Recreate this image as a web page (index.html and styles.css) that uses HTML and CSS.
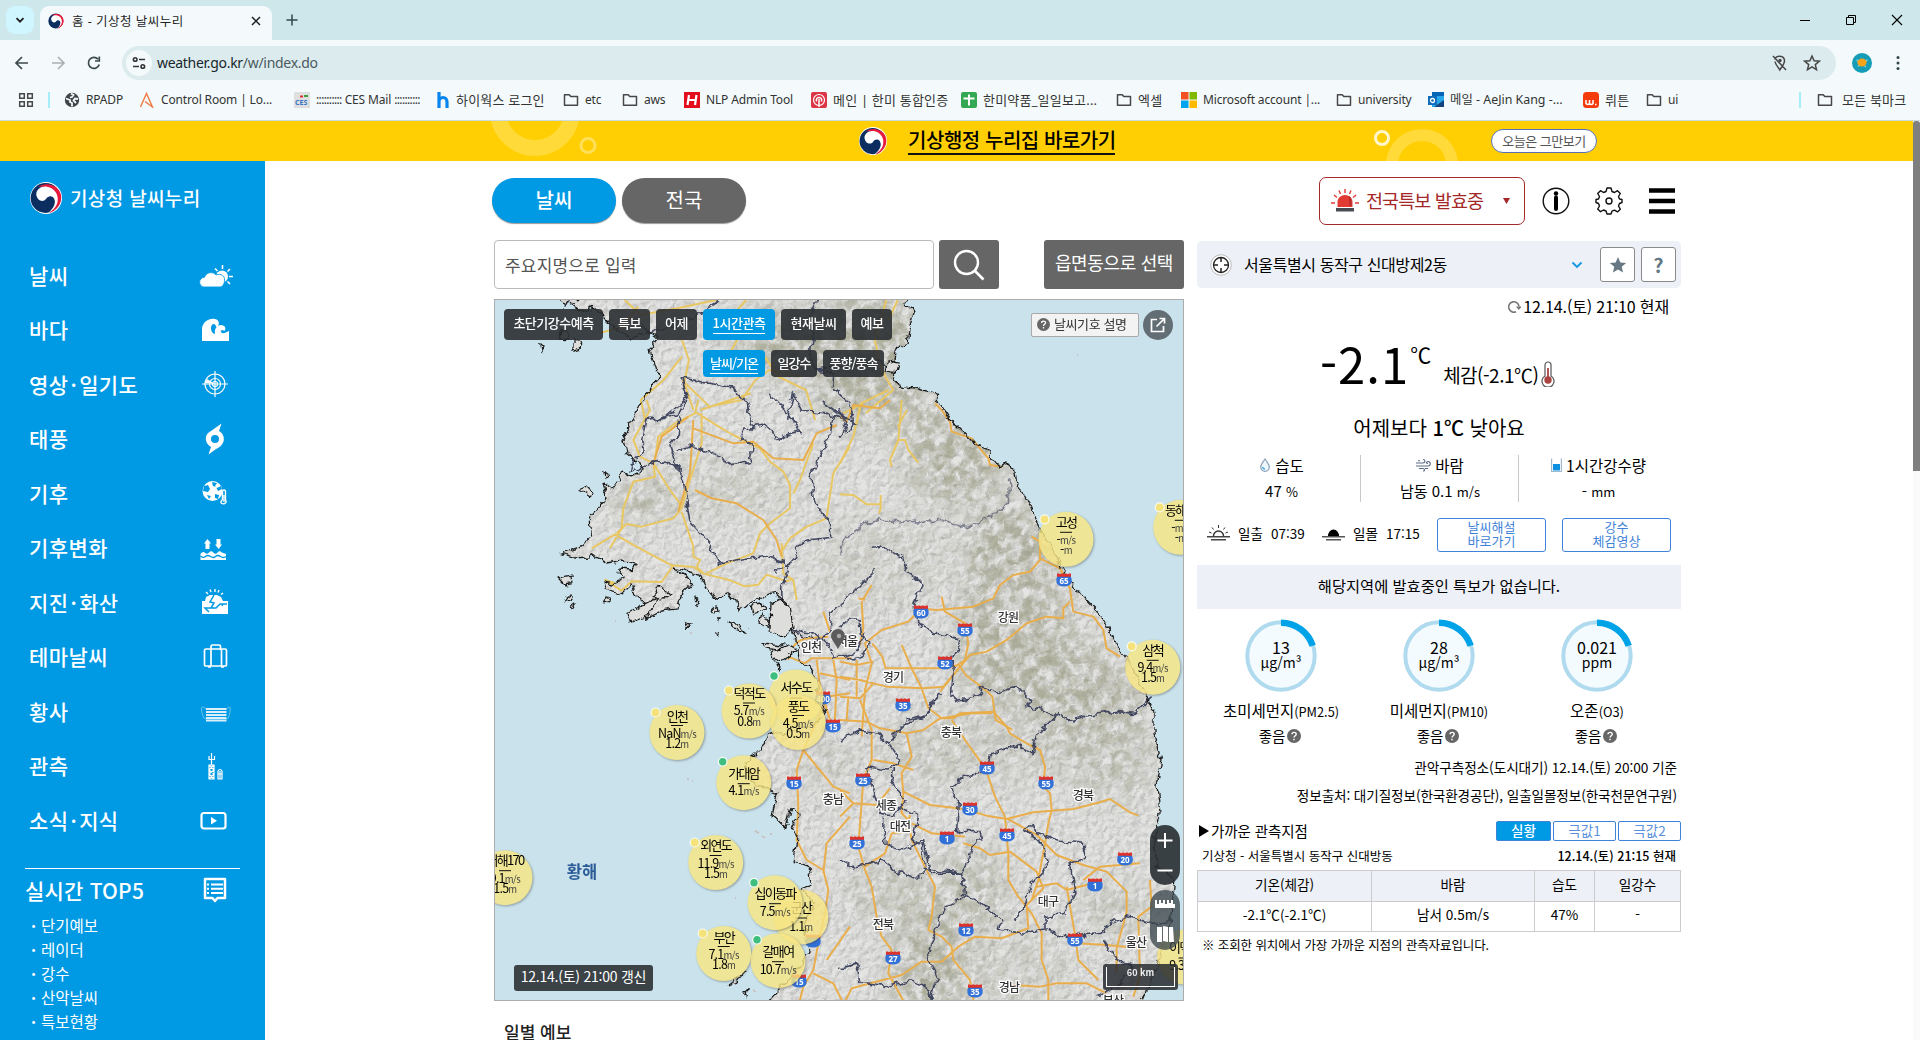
FILE: index.html
```html
<!DOCTYPE html>
<html lang="ko">
<head>
<meta charset="utf-8">
<title>홈 - 기상청 날씨누리</title>
<link rel="stylesheet" href="styles.css">
</head>
<body>
<svg class="defs" width="0" height="0" aria-hidden="true">
  <symbol id="emblem" viewBox="0 0 32 32">
    <circle cx="16" cy="16" r="16" fill="#fff"/>
    <circle cx="15.6" cy="16" r="15" fill="#0b2d60"/>
    <path d="M8 5C16-1 29 3 31 13c1.500 9-5 16-12 18.300C25 26 27 20 25 13c-3-7-11-9-17-8z" fill="#e8193c"/>
    <path d="M6.300 12.500C6 7 12 3.500 17 4.700c8 1.600 12 8.300 10.500 15.300C26.300 25.300 22.500 29 18 31c6-4.700 8.300-10.500 6-14.500-2-3.300-6-2.500-8 .500-3.200 4-9 1.500-9.700-4.500z" fill="#fff"/>
  </symbol>
  <symbol id="folder" viewBox="0 0 16 16"><path d="M1.500 13.300V2.700h4.700l1.600 1.800h6.700v8.800z" fill="none" stroke="#474747" stroke-width="1.500" stroke-linejoin="round"/></symbol>
  <symbol id="qmark" viewBox="0 0 14 14"><circle cx="7" cy="7" r="7" fill="#666"/><path d="M5 5.300C5 2.700 9.200 2.800 9.200 5.200 9.200 6.800 7 6.700 7 8.600M7 9.800v1.500" fill="none" stroke="#fff" stroke-width="1.400"/></symbol>
</svg>

<header class="browser">
  <div class="tabstrip">
    <button class="tab-search"><svg width="10" height="10" viewBox="0 0 10 10"><path d="M1.500 3.200 5 6.700l3.500-3.500" fill="none" stroke="#1f1f1f" stroke-width="1.800"/></svg></button>
    <div class="tab">
      <svg width="16" height="16"><use href="#emblem"/></svg>
      <span class="tab-title">홈 - 기상청 날씨누리</span>
      <svg width="10" height="10" viewBox="0 0 10 10"><path d="M1 1l8 8M9 1 1 9" stroke="#1f1f1f" stroke-width="1.500"/></svg>
    </div>
    <svg class="new-tab" width="12" height="12" viewBox="0 0 12 12"><path d="M6 .500v11M.500 6h11" stroke="#33474b" stroke-width="1.500"/></svg>
    <div class="window-buttons">
      <svg width="12" height="12" viewBox="0 0 12 12"><path d="M1 6.500h10" stroke="#000"/></svg>
      <svg width="12" height="12" viewBox="0 0 12 12"><path d="M1.500 3.500h7v7h-7zM3.500 3.500v-2h7v7h-2" fill="none" stroke="#000"/></svg>
      <svg width="12" height="12" viewBox="0 0 12 12"><path d="M1 1l10 10M11 1 1 11" stroke="#000" stroke-width="1.100"/></svg>
    </div>
  </div>
  <div class="toolbar">
    <svg width="16" height="16" viewBox="0 0 16 16"><path d="M8 2 2 8l6 6M2 8h12" fill="none" stroke="#3c4a4d" stroke-width="1.700"/></svg>
    <svg width="16" height="16" viewBox="0 0 16 16"><path d="m8 2 6 6-6 6M2 8h12" fill="none" stroke="#a9b1b3" stroke-width="1.700"/></svg>
    <svg width="16" height="16" viewBox="0 0 16 16"><path d="M13.200 9.500A5.500 5.500 0 1 1 12 4.200M13.300 1.500V6H9" fill="none" stroke="#3c4a4d" stroke-width="1.700"/></svg>
    <div class="omnibox">
      <span class="site-info"><svg width="14" height="14" viewBox="0 0 14 14"><g fill="none" stroke="#333" stroke-width="1.600"><circle cx="3.200" cy="3.500" r="1.800"/><path d="M7 3.500h6M1 10.500h6"/><circle cx="10.800" cy="10.500" r="1.800"/></g></svg></span>
      <span class="url">weather.go.kr<i>/w/index.do</i></span>
      <svg class="push" width="18" height="18" viewBox="0 0 18 18"><path d="M4 5.500C4.500 1 13.500 1 13.500 7c0 3-3 6-4.700 9C7.500 13.500 4.500 11 4 7.500M2 2l13 14" fill="none" stroke="#474747" stroke-width="1.500"/><circle cx="9" cy="6.500" r="1.700" fill="#474747"/></svg>
      <svg width="18" height="18" viewBox="0 0 18 18"><path d="m9 2 2.100 4.700 5.100.500-3.900 3.400 1.200 5L9 12.900l-4.500 2.700 1.200-5-3.900-3.400 5.100-.500z" fill="none" stroke="#474747" stroke-width="1.500"/></svg>
    </div>
    <svg class="avatar" width="20" height="20" viewBox="0 0 20 20"><circle cx="10" cy="10" r="10" fill="#159db8"/><path d="M4.500 7l2 1M15.500 7l-2 1M6 13.500l1.500-1.500M14 14l-1.500-1.500" stroke="#7bd3d8" stroke-width="1.400"/><ellipse cx="10" cy="9.500" rx="4.600" ry="4" fill="#f5a31a"/></svg>
    <svg width="16" height="16" viewBox="0 0 16 16" fill="#33474b"><circle cx="8" cy="2.500" r="1.500"/><circle cx="8" cy="8" r="1.500"/><circle cx="8" cy="13.500" r="1.500"/></svg>
  </div>
  <nav class="bookmarks">
    <span class="apps"><svg width="16" height="16" viewBox="0 0 16 16"><path d="M1.700 1.700h4.600v4.600H1.700zM9.700 1.700h4.600v4.600H9.700zM1.700 9.700h4.600v4.600H1.700zM9.700 9.700h4.600v4.600H9.700z" fill="none" stroke="#474747" stroke-width="1.500"/></svg></span>
    <a><svg width="16" height="16" viewBox="0 0 16 16"><circle cx="8" cy="8" r="7.200" fill="#414549"/><path d="M2 6.500l4 1.500v2l2 1v3.500M7 1.500 9.500 3 8 5 6 5.500M14 7l-3-.500-1.500 2L12 11" stroke="#f4fafb" stroke-width="1.800" fill="none"/></svg>RPADP</a>
    <a><svg width="16" height="16" viewBox="0 0 16 16"><path d="M1.500 15 7.500 1.500 13.500 15 6 9.500" fill="none" stroke="#ee7b43" stroke-width="1.400"/></svg>Control Room | Lo...</a>
    <a><svg width="16" height="16" viewBox="0 0 16 16"><path d="M0 0h16v16H0z" fill="#dfdfdf"/><path d="M6 4.500h3" stroke="#d33" stroke-width="2"/><path d="M10 4h4" stroke="#3b9e40" stroke-width="2"/><text x="1" y="13" class="ces">CES</text></svg><span><i>::::::::::</i> CES Mail <i>::::::::::</i></span></a>
    <a class="ko"><svg width="14" height="16" viewBox="0 0 14 16"><path d="M3 0v16M3 10c0-6 8-6 8 0v6" fill="none" stroke="#0785ee" stroke-width="3.200"/></svg>하이웍스 로그인</a>
    <a><svg width="16" height="16"><use href="#folder"/></svg>etc</a>
    <a><svg width="16" height="16"><use href="#folder"/></svg>aws</a>
    <a><svg width="16" height="16" viewBox="0 0 16 16"><path d="M0 0h16v16H0z" fill="#e30d1c"/><path d="M5 3 3.500 13M12.500 3 11 13M4 8h8" stroke="#fff" stroke-width="2.200"/></svg>NLP Admin Tool</a>
    <a class="ko"><svg width="16" height="16" viewBox="0 0 16 16"><rect width="16" height="16" rx="2" fill="#dc3545"/><circle cx="8" cy="8" r="5.500" fill="none" stroke="#fff" stroke-width="1.200"/><path d="M5.500 9.500C4 4 12 4 10.500 9.500M8 7v8" fill="none" stroke="#fff" stroke-width="1.500"/></svg>메인 | 한미 통합인증</a>
    <a class="ko"><svg width="16" height="16" viewBox="0 0 16 16"><rect width="16" height="16" rx="2" fill="#34a853"/><path d="M8 2.500v11M2.500 6.500h11" stroke="#fff" stroke-width="2"/></svg>한미약품_일일보고...</a>
    <a class="ko"><svg width="16" height="16"><use href="#folder"/></svg>엑셀</a>
    <a><svg width="16" height="16" viewBox="0 0 16 16"><path d="M0 0h7.500v7.500H0z" fill="#f25022"/><path d="M8.500 0H16v7.500H8.500z" fill="#7fba00"/><path d="M0 8.500h7.500V16H0z" fill="#00a4ef"/><path d="M8.500 8.500H16V16H8.500z" fill="#ffb900"/></svg>Microsoft account |...</a>
    <a><svg width="16" height="16"><use href="#folder"/></svg>university</a>
    <a><svg width="16" height="16" viewBox="0 0 16 16"><path d="M4 0h12v15H4z" fill="#28a8ea"/><path d="M4 0h12v4H4z" fill="#0364b8"/><path d="m6 15 10-7v7z" fill="#14447d"/><path d="M0 4h9v9H0z" fill="#0f6cbd"/><circle cx="4.500" cy="8.500" r="2" fill="none" stroke="#fff" stroke-width="1.300"/></svg><span class="mail">메일 - AeJin Kang -...</span></a>
    <a class="ko"><svg width="16" height="16" viewBox="0 0 16 16"><rect width="16" height="16" rx="3.500" fill="#f43b0b"/><path d="M3 8v3.500q2 2 3.500 0V8v3.500q2 2 3.500 0V8M12 12.500h1.500" fill="none" stroke="#fff" stroke-width="1.500"/></svg>뤼튼</a>
    <a><svg width="16" height="16"><use href="#folder"/></svg>ui</a>
    <a class="all ko"><svg width="16" height="16"><use href="#folder"/></svg>모든 북마크</a>
  </nav>
</header>

<div class="viewport">
  <div class="site">
    <div class="banner">
      <svg class="banner-art" width="1913" height="40" viewBox="0 121 1913 40" fill="none">
        <circle cx="535" cy="111" r="37" stroke="#ffda38" stroke-width="16"/>
        <circle cx="588" cy="145.500" r="7" stroke="#ffe05c" stroke-width="3"/>
        <circle cx="1382" cy="138" r="6.500" stroke="#fff6cc" stroke-width="3"/>
        <circle cx="1422" cy="165" r="30" stroke="#ffda38" stroke-width="12"/>
      </svg>
      <svg width="28" height="28"><use href="#emblem"/></svg>
      <a class="banner-link">기상행정 누리집 바로가기</a>
      <button class="banner-close">오늘은 그만보기</button>
    </div>
    <div class="page">
      <aside class="sidebar">
        <div class="brand"><svg width="32" height="32"><use href="#emblem"/></svg>기상청 날씨누리</div>
        <ul class="menu">
          <li>날씨<svg width="34" height="34" viewBox="0 -5 34 34"><circle cx="23" cy="13.500" r="6" fill="#fff"/><path d="M23.500 2v4M31 6l-2.500 2.500M34 13.500h-4M31 21l-2.500-2.500M16 5.500 18.500 8" stroke="#fff" stroke-width="1.600"/><path d="M5.500 24C-1 24-1 14.500 5.500 14.200 7.500 8.500 15 8.500 17 12c5-2 9 1 8.500 5 0 4-1.500 7-5 7z" fill="#fff" stroke="#0099e3" stroke-width=".900"/></svg></li>
          <li>바다<svg width="34" height="34" viewBox="0 0 34 34"><path d="M3 28V15C4 8 11 4.500 16 6c5 1 5 7 1 8 0-4-5-4-5 1 0 3 2 6 4 6-1-5 2-9 6-9 4 0 6 4 3 6-1-2-4-1-3 1 2 3 5 0 8-1v10z" fill="#fff"/></svg></li>
          <li><span>영상<i>·</i>일기도</span><svg width="34" height="34" viewBox="0 0 34 34"><g fill="none" stroke="#fff" stroke-width="1.200"><circle cx="16" cy="17" r="10"/><circle cx="16" cy="17" r="5.500"/><circle cx="16" cy="17" r="2.500"/><path d="M16 4v26M3 17h26"/></g><path d="m16 17-10-1 2-4z" fill="#fff"/></svg></li>
          <li>태풍<svg width="34" height="34" viewBox="0 0 34 34"><path d="M22.500 1.500 20 9c7 4 7 14-3 18L9.500 32.500 12 25C5 21 5 12 12 9z" fill="#fff"/><circle cx="16" cy="17" r="4" fill="#0099e3"/></svg></li>
          <li>기후<svg width="34" height="34" viewBox="0 0 34 34"><circle cx="13.500" cy="15" r="10" fill="#fff"/><path d="M5 10l4-1 2 4-2 3-5-1zM13 6l5 1-2 3 2 2 4-2 1 3-4 2-2-4-3-1zM8 19l4 1-2 3zM16 18l4 1-1 4-3-1z" fill="#0099e3"/><path d="M23.500 15.500c0-2 3-2 3 0V24c3 4-5.500 5.500-4.500 1.500l1.500-2z" fill="#0099e3" stroke="#fff" stroke-width="1.400"/><path d="M25 19v7" stroke="#fff" stroke-width="1.400"/></svg></li>
          <li>기후변화<svg width="34" height="34" viewBox="0 -3 34 34"><path d="M8.500 5 12 9.500h-1.500V15h-4V9.500H5zM19.700 15 16 10.500h1.500V5h4v5.500H23z" fill="#fff"/><path d="M1.500 20q2-3 4.200-1.500Q8 21 10 18.500t4.300 0 4.300 0 4.200 0L27 20v6H1.500z" fill="#fff"/><path d="M1.500 22q3 2.500 5 .500t5 0 5 0 5 0 5.500 0" fill="none" stroke="#0099e3" stroke-width="1.300"/></svg></li>
          <li><span>지진<i>·</i>화산</span><svg width="34" height="34" viewBox="0 0 34 34"><path d="M3 16h3l1-4 4-2h7l4 2 2 4h5v13H3z" fill="#fff"/><path d="m15 10-4 7 4 1-3 5h-6l4 4m2-4h5l4-4h7m-4 0-1 2" fill="none" stroke="#0099e3" stroke-width="1.500"/><path d="M7 7l2 2M11 4.500 12 7M16 4v3M20 5l-1 2.500M24 8l-2 1.500" stroke="#fff" stroke-width="1.400"/></svg></li>
          <li>테마날씨<svg width="34" height="34" viewBox="0 0 34 34"><path d="M12 10V6.500q0-1.500 1.500-1.500h6.500q1.500 0 1.500 1.500V10M7 9h19q1.500 0 1.500 1.500v14.500q0 1-1.500 1H7q-1.500 0-1.500-1V10.500Q5.500 9 7 9zM12 9v17M22.500 9v17M9 27h3M22 27h3" fill="none" stroke="#fff" stroke-width="1.700"/></svg></li>
          <li>황사<svg width="34" height="34" viewBox="0 0 34 34"><g fill="none" stroke="#fff"><path d="M7 15h20.500M7 18h20.500M7 21h20.500M7 24h20.500M7 26.500h20.500" stroke-width="1.800" opacity=".85"/><path d="M7 15Q2 10 2.500 16.500 4 25 7 25M27.500 15q5-5 3.500 2.500Q30 25 27.500 25" stroke-width=".800" opacity=".5"/></g></svg></li>
          <li>관측<svg width="34" height="34" viewBox="0 0 34 34"><g fill="none" stroke="#fff" stroke-width="1.200"><path d="M12.500 4v12M10 7v3.500h5.500V7M10 16h5v14h-5zM10 16l5 5-5 4 5 5M15 16l-5 5 5 4-5 5"/><path d="M19 30v-8q2-3 4 0v8zM19 25h4M21 22v8"/></g></svg></li>
          <li><span>소식<i>·</i>지식</span><svg width="34" height="34" viewBox="0 0 34 34"><rect x="2.500" y="10" width="24" height="15.500" rx="2.500" fill="none" stroke="#fff" stroke-width="2.200"/><path d="M12 14v7.500l6-3.750z" fill="#fff"/></svg></li>
        </ul>
        <div class="top5">
          <h2>실시간 TOP5<svg width="26" height="28" viewBox="0 0 26 28"><path d="M3 2h20v19h-7.500l-2.500 3-2.500-3H3z" fill="none" stroke="#fff" stroke-width="2.500" stroke-linejoin="round"/><path d="M9 7.500h12M9 11.700h12M9 16h12" stroke="#fff" stroke-width="2"/><path d="M5 7.500h2M5 11.700h2M5 16h2" stroke="#fff" stroke-width="2"/></svg></h2>
          <ul><li>단기예보</li><li>레이더</li><li>강수</li><li>산악날씨</li><li>특보현황</li></ul>
        </div>
      </aside>

      <main class="content">
        <div class="topbar">
          <a class="pill active">날씨</a><a class="pill">전국</a>
          <button class="alert"><svg width="28" height="24" viewBox="0 0 28 24"><path d="M6.500 18v-5.500a7.500 6.500 0 0 1 15 0V18z" fill="#e23b34"/><path d="M18 7c2 1 2.500 3 2.500 10h-2z" fill="#b52b2b"/><path d="M5 19h18v3.500H5z" fill="#474b52"/><path d="M14 0v4M8 1.500l1.500 3.500M20 1.500 18.500 5M3 6l3 2.500M25 6l-3 2.500M0 14h4M24 14h4" stroke="#e23b34" stroke-width="1.400"/></svg><span>전국특보 발효중</span><svg width="7" height="6" viewBox="0 0 7 6"><path d="M0 0h7L3.500 6z" fill="#a42828"/></svg></button>
          <svg class="i-info" width="28" height="28" viewBox="0 0 28 28"><circle cx="14" cy="14" r="12.800" fill="none" stroke="#111" stroke-width="1.400"/><circle cx="14" cy="6.500" r="2.200"/><path d="M14 10.500V22" stroke="#000" stroke-width="4" stroke-linecap="round"/></svg>
          <svg class="i-gear" width="28" height="28" viewBox="0 0 28 28"><path d="M12 1h4l1 3.500 2.500 1 3-1.800 2.800 2.800L23.500 9.500l1 2.500 2.500.500v3l-2.500 1-1 2.500 1.800 3.200-2.800 2.700-3-1.700-2.500 1L16 27h-4l-1-3-2.500-1-3 1.700-2.800-2.700L4.500 19l-1-2.500-2.500-1v-3l2.500-.5 1-2.500-1.800-3 2.800-2.800 3 1.800 2.500-1z" fill="none" stroke="#111" stroke-width="1.400" stroke-linejoin="round"/><circle cx="14" cy="14" r="3" fill="none" stroke="#111" stroke-width="1.400"/></svg>
          <svg class="i-menu" width="26" height="26" viewBox="0 0 26 26"><path d="M0 2.500h26M0 13h26M0 23.500h26" stroke="#000" stroke-width="4.600"/></svg>
        </div>

        <div class="columns">
          <section class="left">
            <div class="search">
              <div class="field">주요지명으로 입력</div>
              <button class="find"><svg width="34" height="34" viewBox="0 0 34 34"><circle cx="14.500" cy="14.500" r="11.500" fill="none" stroke="#fff" stroke-width="2.400"/><path d="m23 23 8.500 8.500" stroke="#fff" stroke-width="2.600"/></svg></button>
              <button class="pick">읍면동으로 선택</button>
            </div>

            <div class="map">
              <svg class="map-art" width="688" height="700" viewBox="495 300 688 700">
                <defs>
                  <clipPath id="landclip"><path id="land" d="M558 299l6 9 4-7 14 10 10-4 12 10 9 9 18 12 19-6 7 5-7 13 4 10 4 18-11 15-9 16-8 15-7 17 3 12 10 9 9 6-6 3-7 7-10-6-3 9-6 8-9-6 3 13-6 8-12 14 1 10 2 9-6 5-7 6-17 6 12 4 13-1 4-3 16 9 15-3 14 4-5 5-12-1-1 6 6 5-10 4-10-2 2 7 15 6 10-10 3 9 8 8 4 18 16-8 15-2 4-15 11-10-6-8-14-8 27 6 7 14 10 12 10-7 10 7 3 12 10-9 13-5 12-6 13 11 2 17 3 13 5 7 2 20 13 10 7 13-4 18 11 9-10 14-34 10-10-3-11 17-8 8-8 7 8 20 24 10-5 22 14 13 5-20 9 7-9 9 6 13-3 24 15 6 3 17-11 5 14 15-11 17 5 30-12 20-16 16-10 10-2 10h370l18-41 13-43 5-44-18-13-3-27 6-26-3-27 5-27-8-26v-19l-10-25-14-25-16-25-10-20-24-25-13-18-20-35-10-20-8-18-12-19-2-13-10-10-6 5-12-17-13-5-17-16-15-20-8-15-18-5-16-1-8-14 2-22 14-8 2-13 5-17-10-10 8-13z"/></clipPath>
                  <filter id="jag" filterUnits="userSpaceOnUse" x="480" y="285" width="720" height="730"><feTurbulence type="fractalNoise" baseFrequency=".11" numOctaves="3" seed="8"/><feDisplacementMap in="SourceGraphic" scale="9" xChannelSelector="R" yChannelSelector="G"/></filter>
                  <filter id="relief" filterUnits="userSpaceOnUse" x="494" y="299" width="690" height="702" color-interpolation-filters="sRGB"><feTurbulence type="fractalNoise" baseFrequency=".16" numOctaves="4" seed="4"/><feColorMatrix values="0 0 0 0 0 0 0 0 0 0 0 0 0 0 0 1 0 0 0 0"/><feDiffuseLighting surfaceScale=".65" diffuseConstant="1.130" lighting-color="#fff"><feDistantLight azimuth="225" elevation="58"/></feDiffuseLighting></filter>
                  <filter id="patch" filterUnits="userSpaceOnUse" x="480" y="285" width="720" height="730"><feGaussianBlur stdDeviation="14" result="b"/><feTurbulence type="fractalNoise" baseFrequency=".09" numOctaves="5" seed="12" result="n"/><feColorMatrix in="n" values="0 0 0 0 0 0 0 0 0 0 0 0 0 0 0 0 3 0 0 -1"/><feComposite in="b" operator="in"/></filter>
                  <symbol id="shield" viewBox="0 0 16 14" overflow="visible"><path d="M1.300 3h13.400q1.600 3 .8 6.500Q14 13.500 8 13.500T.5 9.500Q-.3 6 1.300 3z" fill="#3272d8"/><path d="M1 .4h2l1 .8 1.500-.8h1.500l1 .8 1-.8h1.500l1.500.8 1-.8h2v3.400H1z" fill="#dc322b"/></symbol>
                </defs>
                <path d="M495 300h688v700H495z" fill="#c9e2eb"/>
                <g filter="url(#jag)">
                  <use href="#land" fill="#e4e4e3"/>
                  <g class="terrain" clip-path="url(#landclip)">
                    <path d="M494 299h690v702H494z" filter="url(#relief)"/>
                  </g>
                  <g clip-path="url(#landclip)">
                    <g fill="#8f9173" filter="url(#patch)" opacity=".6">
                      <ellipse cx="870" cy="360" rx="65" ry="70"/><ellipse cx="955" cy="455" rx="55" ry="50"/><ellipse cx="1010" cy="560" rx="45" ry="60"/><ellipse cx="1075" cy="690" rx="55" ry="45"/><ellipse cx="1015" cy="640" rx="60" ry="70"/><ellipse cx="780" cy="340" rx="55" ry="35"/><ellipse cx="640" cy="500" rx="25" ry="20"/><ellipse cx="725" cy="490" rx="70" ry="30" opacity=".4"/><ellipse cx="930" cy="965" rx="38" ry="65"/><ellipse cx="970" cy="890" rx="40" ry="45" opacity=".7"/><ellipse cx="970" cy="750" rx="100" ry="35" opacity=".5"/><ellipse cx="1110" cy="740" rx="50" ry="60" opacity=".7"/><ellipse cx="1115" cy="910" rx="40" ry="30" opacity=".5"/><ellipse cx="880" cy="560" rx="70" ry="45" opacity=".35"/><ellipse cx="1020" cy="970" rx="50" ry="40" opacity=".4"/><ellipse cx="885" cy="890" rx="35" ry="30" opacity=".7"/><ellipse cx="830" cy="770" rx="25" ry="30" opacity=".5"/>
                    </g>
                  </g>
                </g>
                <!-- expressways and trunk roads -->
                <g class="roads minor">
                  <g transform="translate(480 160) scale(.4591 .3333)"><path d="M315 420l35 45 80-20 85-25M345 440l-35 60-50 20M440 540l15 60-10 70 20 80M885 420l-25 120 15 90 25 60-60 70M580 420l-40 60 20 60-20 50M620 590l30 60 60 40 20 90M440 660l60 80 70-20 30-60 30-30 70 20M910 420l-20 60M360 780l-10-60 50-60 40-70M480 750l110-50M890 690l-60 40-10 60M930 750l-20 50"/></g>
                  <g transform="translate(480 400) scale(.3333)"><path d="M500 0l10 30-50 90 20 50 40 20 5 40-65 15-30 80-5 60-35 60M410 400l30-28 45 8 95-25 25-30 25-85 35-110 0-90M335 445l70-42 60 35 110 58 65 5 30 20 80 20 45 18 40-5 25-30 60 20 15-5M405 550l-30-10 50 32 30-28 90 2 35-50M605 335l35 105 0 30 20 10-10 20 20 20M680 520l60-30 80-30 20-60 30-30 60-45 0-70-20-40-40-30-30-40-80-40-35-20-80-50M655 0l-10 40-60 30-50 40-10 70M940 280l20-40 40-110M520 190l50 80 30 40-5 30M1040 350l20-130 50-80M905 430l5 90 30 20 10 60M1040 355l-60 25-50 35-25 40"/></g>
                  <g transform="translate(840 400) scale(.3333)"><path d="M60 20l-20 90-40 80M185 0l-10 120 20 0 10 30 30 38M175 120l-25 60 5 20M0 283l40 2 40 28 40 0M122 285v40l-5 15M10 40l60-30"/></g>
                </g>
                <g class="roads">
                  <g transform="translate(480 400) scale(.3333)"><path d="M520 190l25-80 80-60M640 60l-10 160-35 115M640 85l120 45 60-5 60 50 90 5 40-80 60-25M645 270l50 25 75 15 80 50 40 60 15 50M1030 635l20 60M925 780q10-60 60-65l60-5M925 770l50 20 20-15h120M1010 780l10 80 30 100M1060 780l10 60-5 120M1020 820l90 20M1040 890l70-10"/></g>
                  <g transform="translate(840 400) scale(.3333)"><path d="M285 10l20 20 25 35 5 30 60 20 50 60 5 20 35 5M575 410l25 15 0 55-30 35-50 10-40 30-20 40-60 25-110 10-60-5M600 475l60 30 30 60 10 70 60 15 30 40 10 55 40 25M690 605l-20 20 0 30-50-5-60 20-60 50-60 35-50 10-90 110M0 50l20 15 20-50 80 10 30-25M305 590l10 45 60 35 10 60-10 50-30 20M245 625l-40 40-80 25-50 40 20 60-20 80-10 140M95 555l-30 50 5 80-10 50M55 595l20 5M97 730l30 40 10 35h170l50-10 20 30 60 45 20 20 10 70 50 30M185 735l30 70 30 60 20 60 40 30 90-15h60M0 830l60 10 80 20 110 5 60-5 50-60M0 785l50 10 50-10M50 780v110M25 890l-5 70M0 890l60 5 40-45"/></g>
                  <g transform="translate(840 700) scale(.3333)"><path d="M0 60l80 5 40 20 80 15 50-10 50-35 40 0 20-15 100-5 40 45 10 20 50 30 40 20 15 50-5 60 20 20 5 50-10 40-10 60-20 110-20 60M335 60l40 60 50 70 20 40 20 60 30 60 10 110 0 80 30 50 40 50 30 60 0 80 20 60v80M60 0l35 90 0 90-25 60-15 200 20 70 20 50 15 90 15 60 30 40-10 70 60 110M200 100l15 70-30 50 5 60-5 60 20 20 10 60 40 80 30 60-10 90-10 40 40 20 30 30 5 40 50 60 10 60 20 20M190 275l80 40 100 12 70 20 60 10 80-20 120-10 80-20 30-10 60 40 25 10M370 430l50 15 30 20 60-10 80 60 20 50-50 50 5 70-80 30-80-5-50 30-50 45h-60l-60 40-150 40-20 40M215 370l60 30 100 10M100 180l60 10 60 20M0 270l40 40 70 5 40-50M155 400l45-5 10-50M75 500l60-40 20-60M500 355l90 50 60 60 80 30 70 20 60 60v60l-30 110 0 70M730 540l50-40 120-10M590 560l60-10 30 20 80-20M680 560l10 60 20 110 90 5 100 10M930 540l5 80-40 30 5 180-20 60M520 855l80 5 50-10 90 0 60 30M710 740l5 40 60 60M0 350l40-40"/></g>
                  <g transform="translate(480 700) scale(.3333)"><path d="M1040 0l-70 150-20 60 5 100-5 110 30 60 50 30 15 60-10 70-20 90-15 80-30 50-20 80M970 150l90 110 50 20M1030 520l10-90 70-80M1000 820l60 30 30 60M1040 780l70-100"/></g>
                </g>
                <!-- administrative borders -->
                <g filter="url(#jag)">
                  <g class="borders">
                    <g transform="translate(480 160) scale(.4591 .3333)"><path d="M520 420l-50 50-50 30-50 20-30-40M735 420l-20 60 10 40-5 60 10 50 40 10-5 40 40 50 10 60-20 30M440 655l40 10 70 20 30 40 20 80M440 655l10 60-50 60-40 10M680 700l20 50 80 20 40 20M680 700l-10 80M730 630l60-10 80-20 20 30"/></g>
                    <g transform="translate(480 400) scale(.3333)"><path d="M620 0l-20 40-60 15-40 0-15 60 5 40-30 30-10 30 25-10 50-20 60 10 25 40 5 40 15 90 60 65 25 60 85-15 65-10 60 35-20 60 5 115 40 25 60 20 40-25 5-60 55-50 80-80M600 45l-5 60-25 30 20 60 15 20M590 150l40-15 60 20 60 40 60-10 10-50-40-20 10-30 60-10 50 40 60-20-50-70-40-40M1060 40l-10 70-60 120 10 70 55 70 0 45-90 10-30 60-50 30M940 690l60 10 35 20 30 55 60-15 30-60M1105 60l-80-60"/></g>
                    <g transform="translate(840 400) scale(.3333)"><path d="M0 30l20 40-20 40M95 445l40-5 50 30 10 40 50 40-20 60 5 60 60 30 70 20-20 60-5 110 20 10 60-10 15-30 40 20 60-20 40 40-10 20 80 20 50 20 60-15 80-10 50 5 55-50M300 880l-40 60-60 20M0 680l30-25 30 5 5 50 25 15-20 40-30 15-40-10"/><path opacity=".6" d="M0 460l5-40 60-45 50-15 100 8 90-10 80 25 60-30 60-40 5-80"/></g>
                    <g transform="translate(840 700) scale(.3333)"><path d="M0 120l60-30 60 10 20 30 60-60 60-30 20-40M140 120l40 60-10 20-30 10-60-10 20 60 20 80 40 5 40-40-45-60 5-35M130 350l5 80 50 20 60-30 10 90-30 30-60-30-40-30-80 20-50-25M180 320l55 30-15 70 35 20 20 80 90 0 10 70-60 30-30 80-20 60 30 80-20 40 10 80M245 505l120 15 20-40 20-60 20 0-5-25-70 0 5-90-25-40 50-40 60-10 10-50 80-30 50 25 10-60 70-60M365 580l60 30 60 50-10 30 80 10 60-10 0-40 60-10 30-60-15-90 50-20-10-40-80-10-60-20-15-30-20 20 50 40 20 70-50 50-20 60-30 50M620 690l50 20 120-10 20-30 50-20 80 20 50-10M790 720l40 60 50 20-50 60-60 30M0 800l50-10 10 60 80 10 70-20 60 30 5 40"/></g>
                  </g>
                  <g class="coast">
                    <use href="#land"/>
                    <path d="M771 603l9-4 10 7 3 21-12 10-11-7zM752 605l10-2 4 7-12 4zM762 615l8 4-2 8-8-5zM771 652l18-6 8 4-14 10-10 2zM579 490l8-3 6 6-4 4zM557 578l14-3 1 9-8 1zM565 598l5-3 2 5-6 2zM604 600l5-3 2 5-5 2zM604 472l4 3-3 3zM570 607l6-2-3 4zM712 611l5-4 1 5-4 2zM686 622l5 1-2 4zM716 632l4 1-2 3zM628 614l20-12 10-4-12 18-16 6zM660 586l10 8-10 6-6-5zM560 330l8 4-2 6-5-1zM540 343l3 3-2 7zM574 340l8 2-2 6-6 2zM887 361l12 2-3 10-10-2zM728 622l12 3 6 6-12-3zM695 598l4 3-3 3zM718 618l3 0-1 3zM776 664l4 1-1 5zM763 643l20 2-6 5-12-2zM727 985l18-14-8 11zM744 993l3-3-1 6z"/>
                  </g>
                </g>
                <g class="islands"><path d="M687 779h2M692 781h1M755 831l4 2M762 836l3 2M770 834h2M735 898h1M753 990l3 2M615 621h1M690 633h2M1077 355h1"/></g>

                <g class="shields">
                  <g transform="translate(1064 580)"><use href="#shield" x="-8" y="-7" width="16" height="14"/><text y="4.200">65</text></g>
                  <g transform="translate(921 612)"><use href="#shield" x="-8" y="-7" width="16" height="14"/><text y="4.200">60</text></g>
                  <g transform="translate(965 630)"><use href="#shield" x="-8" y="-7" width="16" height="14"/><text y="4.200">55</text></g>
                  <g transform="translate(945 663)"><use href="#shield" x="-8" y="-7" width="16" height="14"/><text y="4.200">52</text></g>
                  <g transform="translate(903 705)"><use href="#shield" x="-8" y="-7" width="16" height="14"/><text y="4.200">35</text></g>
                  <g transform="translate(863 780)"><use href="#shield" x="-8" y="-7" width="16" height="14"/><text y="4.200">25</text></g>
                  <g transform="translate(857 843)"><use href="#shield" x="-8" y="-7" width="16" height="14"/><text y="4.200">25</text></g>
                  <g transform="translate(987 768)"><use href="#shield" x="-8" y="-7" width="16" height="14"/><text y="4.200">45</text></g>
                  <g transform="translate(1046 783)"><use href="#shield" x="-8" y="-7" width="16" height="14"/><text y="4.200">55</text></g>
                  <g transform="translate(970 809)"><use href="#shield" x="-8" y="-7" width="16" height="14"/><text y="4.200">30</text></g>
                  <g transform="translate(947 838)"><use href="#shield" x="-8" y="-7" width="16" height="14"/><text y="4.200">1</text></g>
                  <g transform="translate(1007 835)"><use href="#shield" x="-8" y="-7" width="16" height="14"/><text y="4.200">45</text></g>
                  <g transform="translate(1125 859)"><use href="#shield" x="-8" y="-7" width="16" height="14"/><text y="4.200">20</text></g>
                  <g transform="translate(1095 885)"><use href="#shield" x="-8" y="-7" width="16" height="14"/><text y="4.200">1</text></g>
                  <g transform="translate(966 930)"><use href="#shield" x="-8" y="-7" width="16" height="14"/><text y="4.200">12</text></g>
                  <g transform="translate(1075 940)"><use href="#shield" x="-8" y="-7" width="16" height="14"/><text y="4.200">55</text></g>
                  <g transform="translate(893 958)"><use href="#shield" x="-8" y="-7" width="16" height="14"/><text y="4.200">27</text></g>
                  <g transform="translate(975 991)"><use href="#shield" x="-8" y="-7" width="16" height="14"/><text y="4.200">35</text></g>
                  <g transform="translate(833 726)"><use href="#shield" x="-8" y="-7" width="16" height="14"/><text y="4.200">15</text></g>
                  <g transform="translate(794 783)"><use href="#shield" x="-8" y="-7" width="16" height="14"/><text y="4.200">15</text></g>
                  <g transform="translate(823 698)"><use href="#shield" x="-8" y="-7" width="16" height="14"/><text y="4.200">400</text></g>
                  <g transform="translate(799 981)"><use href="#shield" x="-8" y="-7" width="16" height="14"/><text y="4.200">15</text></g>
                  <g transform="translate(813 941)"><use href="#shield" x="-8" y="-7" width="16" height="14"/></g>
                </g>
                <g class="cities">
                  <text x="811" y="652">인천</text><text x="847" y="646">서울</text><text x="893" y="682">경기</text><text x="1008" y="622">강원</text><text x="951" y="737">충북</text><text x="833" y="804">충남</text><text x="886" y="810">세종</text><text x="900" y="831">대전</text><text x="1083" y="800">경북</text><text x="1048" y="906">대구</text><text x="883" y="929">전북</text><text x="1136" y="947">울산</text><text x="1009" y="992">경남</text><text x="1113" y="1005">부산</text>
                </g>
                <text class="sea" x="582" y="878">황해</text>
                <path d="M838 649c-4-7-7-10-7-13a7 7 0 0 1 14 0c0 3-3 6-7 13z" fill="#5c5c5c"/><circle cx="839" cy="636" r="2.200" fill="#aaa"/>

                <g class="stations">
                  <g transform="translate(801 917)"><circle r="27.500"/><text y="-5">군산</text><path d="M-6 1H6"/><text class="v" y="14">1.1<tspan>m</tspan></text></g>
                  <g transform="translate(796 697)"><circle r="27.500"/><circle class="dot g" cx="-22" cy="-21" r="4.300"/><text y="-5">서수도</text><path d="M-6 1H6"/></g>
                  <g transform="translate(749 711)"><circle r="27.500"/><circle class="dot" cx="-20" cy="-20.500" r="4.500"/><text y="-13">덕적도</text><path d="M-6-8H6"/><text class="v" y="4">5.7<tspan>m/s</tspan></text><text class="v" y="14.500">0.8<tspan>m</tspan></text></g>
                  <g transform="translate(798 722.500)"><circle r="27.500"/><text y="-12">풍도</text><path d="M-6-7H6"/><text class="v" y="5">4.5<tspan>m/s</tspan></text><text class="v" y="15">0.5<tspan>m</tspan></text></g>
                  <g transform="translate(677 732.500)"><circle r="27.500"/><circle class="dot" cx="-21.500" cy="-20" r="4.500"/><text y="-12">인천</text><path d="M-6-7H6"/><text class="v" y="5">NaN<tspan>m/s</tspan></text><text class="v" y="15">1.2<tspan>m</tspan></text></g>
                  <g transform="translate(743.700 782.700)"><circle r="27.500"/><circle class="dot g" cx="-21" cy="-21" r="4.300"/><text y="-5">가대암</text><path d="M-6 1H6"/><text class="v" y="12.500">4.1<tspan>m/s</tspan></text></g>
                  <g transform="translate(715.700 862.500)"><circle r="27.500"/><circle class="dot" cx="-21" cy="-20" r="4.500"/><text y="-13">외연도</text><path d="M-6-7H6"/><text class="v" y="5">11.9<tspan>m/s</tspan></text><text class="v" y="15">1.5<tspan>m</tspan></text></g>
                  <g transform="translate(775 902.700)"><circle r="27.500"/><circle class="dot g" cx="-21" cy="-20" r="4.300"/><text y="-5">십이동파</text><path d="M-6 1H6"/><text class="v" y="13">7.5<tspan>m/s</tspan></text></g>
                  <g transform="translate(723.700 953.500)"><circle r="27.500"/><circle class="dot" cx="-21" cy="-20" r="4.500"/><text y="-12">부안</text><path d="M-6-7H6"/><text class="v" y="5">7.1<tspan>m/s</tspan></text><text class="v" y="15">1.8<tspan>m</tspan></text></g>
                  <g transform="translate(778 960.700)"><circle r="27.500"/><circle class="dot g" cx="-21" cy="-21" r="4.300"/><text y="-5">갈매여</text><path d="M-6 1H6"/><text class="v" y="13">10.7<tspan>m/s</tspan></text></g>
                  <g transform="translate(505 877.700)"><circle r="27.500"/><text x="0" y="-13">서해170</text><path d="M-6-7H6"/><text class="v" y="5">9.1<tspan>m/s</tspan></text><text class="v" y="15">1.5<tspan>m</tspan></text></g>
                  <g transform="translate(1066 539.300)"><circle r="27.500"/><circle class="dot" cx="-21.500" cy="-20" r="4.500"/><text y="-12">고성</text><path d="M-6-7H6"/><text class="v" y="5">-<tspan>m/s</tspan></text><text class="v" y="15">-<tspan>m</tspan></text></g>
                  <g transform="translate(1180.700 527.300)"><circle r="27.500"/><circle class="dot" cx="-21" cy="-20" r="4.500"/><text y="-12">동해57</text><path d="M-6-7H6"/><text class="v" y="5">-<tspan>m/s</tspan></text><text class="v" y="15">-<tspan>m</tspan></text></g>
                  <g transform="translate(1152.700 667.300)"><circle r="27.500"/><circle class="dot" cx="-21" cy="-21" r="4.500"/><text y="-12">삼척</text><path d="M-6-7H6"/><text class="v" y="5">9.4<tspan>m/s</tspan></text><text class="v" y="15">1.5<tspan>m</tspan></text></g>
                  <g transform="translate(1184.500 957)"><circle r="27.500"/><text y="-5">이덕서</text><path d="M-6 1H6"/><text class="v" y="13">9.3<tspan>m/s</tspan></text></g>
                </g>
              </svg>

              <div class="layers">
                <div class="row"><b>초단기강수예측</b><b>특보</b><b>어제</b><b class="on"><u>1시간관측</u></b><b>현재날씨</b><b>예보</b></div>
                <div class="row sub"><b class="on"><u>날씨/기온</u></b><b>일강수</b><b>풍향/풍속</b></div>
              </div>
              <div class="legend">
                <span><svg width="13" height="13"><use href="#qmark"/></svg>날씨기호 설명</span>
                <i><svg width="16" height="16" viewBox="0 0 16 16"><path d="M7 2.500H1.500v12h12V9M9.500 1.500h5v5M14 2 6.500 9.500" fill="none" stroke="#fff" stroke-width="1.700"/></svg></i>
              </div>
              <div class="tools">
                <div class="tool zoom"><svg width="30" height="60" viewBox="0 0 30 60"><path d="M15 8v15M7.500 15.500h15M7.500 45.500h15" stroke="#fff" stroke-width="2"/></svg></div>
                <div class="tool"><svg width="30" height="60" viewBox="0 0 30 60" fill="#fff"><path d="M5 10h2v4h2v-4h2v3h2v-3h2v4h2v-4h2v3h2v-3h2v4h2v4H5zM7 37h5v15H7zM13 36l5 1v15l-5-1zM19 37h4l1 15h-5z"/></svg></div>
              </div>
              <div class="scale"><span>60 km</span></div>
              <div class="updated">12.14.(토) 21:00 갱신</div>
            </div>
            <h2 class="daily">일별 예보</h2>
          </section>

          <section class="right">
            <div class="location">
              <svg width="22" height="22" viewBox="0 0 22 22"><circle cx="11" cy="11" r="10.300" fill="#fff" stroke="#bbb"/><circle cx="11" cy="11" r="7.500" fill="none" stroke="#222" stroke-width="1.300"/><path d="M11 3v5M11 14v5M3 11h5M14 11h5" stroke="#222" stroke-width="1.500"/></svg>
              <span class="place">서울특별시 동작구 신대방제2동</span>
              <svg width="12" height="8" viewBox="0 0 12 8"><path d="m1.500 1.500 4.500 4.500 4.500-4.500" fill="none" stroke="#1499e0" stroke-width="1.900"/></svg>
              <button class="sq"><svg width="18" height="18" viewBox="0 0 18 18"><path d="m9 1 2.300 5.500 5.900.4-4.500 3.900 1.400 5.800L9 13.500l-5.100 3.100 1.400-5.800L.8 6.900l5.900-.4z" fill="#657884"/></svg></button>
              <button class="sq">?</button>
            </div>
            <div class="asof"><svg width="14" height="14" viewBox="0 0 14 14"><path d="M9 11.700A5.200 5.200 0 1 1 12 6.500" fill="none" stroke="#777" stroke-width="1.600"/><path d="M9 6.500h5.500L11.800 10z" fill="#777"/></svg>12.14.(토) 21:10 현재</div>
            <div class="temp"><strong>-2.1</strong><sup>℃</sup><span>체감(-2.1℃)</span><svg width="16" height="26" viewBox="0 0 16 26"><path d="M5 15V4a3 3 0 0 1 6 0v11a6 6 0 1 1-6 0z" fill="#fff" stroke="#555" stroke-width="1.200"/><path d="M8 7v10" stroke="#a44" stroke-width="1.800"/><circle cx="8" cy="19" r="3.700" fill="#a94442"/></svg></div>
            <p class="compare">어제보다 <b>1℃</b> 낮아요</p>
            <div class="stats">
              <div><p><svg width="12" height="14" viewBox="0 0 12 14"><path d="M6 1c2.500 4 4.300 5.600 4.300 8A4.300 4.300 0 0 1 1.700 9C1.700 6.600 3.500 5 6 1z" fill="#eef7fc" stroke="#8ba0b8" stroke-width="1.200"/><path d="M3.500 9q.5 2 2.500 2" fill="none" stroke="#4aaee0" stroke-width="1.400"/></svg>습도</p><em>47 <small>%</small></em></div>
              <div><p><svg width="15" height="14" viewBox="0 0 15 14" fill="none" stroke="#5b6b86" stroke-width="1.100"><path d="M0 5h7c3 0 2-4 0-3.500M2 2.700h2M0 8h12c3 0 3-4.500 0-4.500-2 0-2 2 0 2M3 10.500h4c2 0 2 3 0 2.500M9 10.500h3"/></svg>바람</p><em>남동 0.1 <small>m/s</small></em></div>
              <div><p><svg class="cup" width="11" height="14" viewBox="0 0 11 14"><path d="M.600.500v13h9.800V.500" fill="none" stroke="#9db8cf" stroke-width="1.200"/><path d="M2 6h7v6.500H2z" fill="#0b8fe0"/></svg>1시간강수량</p><em>- <small>mm</small></em></div>
            </div>
            <div class="sun">
              <svg width="23" height="16" viewBox="0 0 23 16"><path d="M6.500 11a5 5 0 0 1 10 0" fill="none" stroke="#333" stroke-width="1.400"/><path d="M11.500 0v3M5 2.500l1.500 2M18 2.500l-1.500 2M2 7l2.500 1M21 7l-2.500 1" stroke="#333"/><path d="M0 11.800h23M4 14.800h15" stroke="#444" stroke-width="1.600"/></svg><span class="w24">일출</span><span class="w35">07:39</span>
              <svg class="gap" width="23" height="16" viewBox="0 0 23 16"><path d="M6 11a5.500 6.500 0 0 1 11 0z"/><path d="M0 11.800h23M4 14.800h15" stroke="#555" stroke-width="1.600"/></svg><span class="w24">일몰</span><span class="w35">17:15</span>
              <a>날씨해설<br>바로가기</a><a>강수<br>체감영상</a>
            </div>
            <div class="notice">해당지역에 발효중인 특보가 없습니다.</div>
            <div class="air">
              <div><div class="gauge"><svg width="74" height="74" viewBox="0 0 74 74"><circle cx="37" cy="37" r="33.700" fill="#f3fbff" stroke="#b0daee" stroke-width="4"/><path d="M37 3.700A33.300 33.300 0 0 1 68.700 26.800" fill="none" stroke="#00a2e8" stroke-width="6.500"/></svg><p>13<br><small>µg/m³</small></p></div><p class="kind">초미세먼지<small>(PM2.5)</small></p><p class="grade">좋음<svg width="14" height="14"><use href="#qmark"/></svg></p></div>
              <div><div class="gauge"><svg width="74" height="74" viewBox="0 0 74 74"><circle cx="37" cy="37" r="33.700" fill="#f3fbff" stroke="#b0daee" stroke-width="4"/><path d="M37 3.700A33.300 33.300 0 0 1 68.700 26.800" fill="none" stroke="#00a2e8" stroke-width="6.500"/></svg><p>28<br><small>µg/m³</small></p></div><p class="kind">미세먼지<small>(PM10)</small></p><p class="grade">좋음<svg width="14" height="14"><use href="#qmark"/></svg></p></div>
              <div><div class="gauge"><svg width="74" height="74" viewBox="0 0 74 74"><circle cx="37" cy="37" r="33.700" fill="#f3fbff" stroke="#b0daee" stroke-width="4"/><path d="M37 3.700A33.300 33.300 0 0 1 68.700 26.800" fill="none" stroke="#00a2e8" stroke-width="6.500"/></svg><p>0.021<br><small>ppm</small></p></div><p class="kind">오존<small>(O3)</small></p><p class="grade">좋음<svg width="14" height="14"><use href="#qmark"/></svg></p></div>
            </div>
            <p class="source">관악구측정소(도시대기) 12.14.(토) 20:00 기준</p>
            <p class="source">정보출처: 대기질정보(한국환경공단), 일출일몰정보(한국천문연구원)</p>
            <div class="near"><h3><svg width="10" height="12" viewBox="0 0 10 12"><path d="M0 0l10 6-10 6z"/></svg>가까운 관측지점</h3><a class="on">실황</a><a>극값1</a><a>극값2</a></div>
            <div class="near-info"><span>기상청 - 서울특별시 동작구 신대방동</span><b>12.14.(토) 21:15 현재</b></div>
            <table>
              <tr><th class="c1">기온(체감)</th><th class="c2">바람</th><th class="c3">습도</th><th>일강수</th></tr>
              <tr><td>-2.1℃(-2.1℃)</td><td>남서 0.5m/s</td><td>47%</td><td>-</td></tr>
            </table>
            <p class="foot">※ 조회한 위치에서 가장 가까운 지점의 관측자료입니다.</p>
          </section>
        </div>
      </main>
    </div>
  </div>
  <div class="scrollbar"><i></i></div>
</div>
</body>
</html>
```

FILE: styles.css
```css
* { box-sizing: border-box; margin: 0; padding: 0; }
body { width: 1920px; height: 1040px; overflow: hidden; background: #fff; color: #000; font: 14px/1.2 "Noto Sans CJK KR", sans-serif; }
svg { display: block; flex: none; }
.defs { position: absolute; }
ul { list-style: none; }
button { font: inherit; border: 0; }
i, em { font-style: normal; }

/* browser window */
.browser { height: 121px; background: #f4fafb; border-bottom: 1px solid #cfdadd; font-family: "Noto Sans", "Noto Sans CJK KR", sans-serif; }
.tabstrip { height: 40px; display: flex; align-items: center; background: #cee7ea; padding-left: 6px; }
.tab-search { width: 28px; height: 28px; border-radius: 9px; background: #d0f7ff; display: flex; align-items: center; justify-content: center; }
.tab { width: 232px; height: 34px; align-self: flex-end; margin-left: 6px; background: #f4fafb; border-radius: 9px 9px 0 0; display: flex; align-items: center; padding: 0 11px 4px 8px; }
.tab-title { flex: 1; margin-left: 8px; font-size: 12.500px; letter-spacing: .5px; color: #1f1f1f; }
.new-tab { margin-left: 14px; }
.window-buttons { margin-left: auto; display: flex; gap: 34px; padding-right: 17px; }
.toolbar { height: 46px; display: flex; align-items: center; padding: 0 14px; }
.toolbar > svg { margin-right: 20px; }
.toolbar > .avatar { margin-right: 18px; }
.toolbar > svg:last-child { margin-right: 0; }
.omnibox { flex: 1; margin-right: 16px; height: 34px; border-radius: 17px; background: #dcebee; display: flex; align-items: center; padding: 0 15px 0 4px; }
.site-info { width: 26px; height: 26px; border-radius: 50%; background: #f4fafb; display: flex; align-items: center; justify-content: center; }
.url { margin-left: 5px; font-size: 14px; letter-spacing: -.3px; color: #17262a; }
.url i { color: #4b5a5e; }
.push { margin-left: auto; margin-right: 14px; }
.bookmarks { height: 28px; display: grid; align-items: center; padding-left: 18px; color: #333; font-size: 12px; letter-spacing: -.15px; line-height: 16px;
  grid-template-columns: 46px 75px 155px 142px 127px 59px 62px 127px 150px 155px 65px 155px 92px 155px 63px 1fr 104px; }
.bookmarks a { display: flex; align-items: center; gap: 6px; white-space: nowrap; }
.bookmarks a.ko { font-size: 13px; letter-spacing: .2px; }
.bookmarks i { letter-spacing: -.65px; }
.bookmarks .mail { font-size: 12.400px; letter-spacing: 0; }
.bookmarks .apps { border-right: 2px solid #a5edf8; width: 32px; }
.bookmarks .all { border-left: 2px solid #a5edf8; margin-left: -17px; padding-left: 16px; gap: 9px; }
.ces { font: bold 7px "Noto Sans"; fill: #3674c8; letter-spacing: 0; }

.viewport { display: flex; height: 919px; }
.site { width: 1913px; }
.scrollbar { width: 7px; background: #fafafa; }
.scrollbar i { display: block; height: 350px; background: #7f7f7f; border-radius: 3px 3px 0 0; }

/* notice strip */
.banner { height: 40px; background: #ffcf03; display: flex; align-items: center; position: relative; padding-left: 859px; }
.banner-art { position: absolute; inset: 0; }
.banner-link { margin-left: 21px; width: 207px; font-size: 20px; font-weight: 500; line-height: 26px; border-bottom: 2px solid #111; white-space: nowrap; letter-spacing: -.450px; }
.banner-close { margin-left: 376px; width: 106px; height: 24px; border-radius: 12px; background: #fff; border: 1px solid #5570b8; color: #555; font-size: 13px; line-height: 20px; letter-spacing: -.5px; position: relative; }

/* sidebar */
.page { display: flex; height: 879px; }
.sidebar { width: 265px; background: #0099e3; color: #fff; }
.brand { display: flex; align-items: center; gap: 8px; padding: 21px 0 0 30px; height: 53px; font-size: 19px; font-weight: 500; letter-spacing: .350px; }
.menu { padding: 34px 32px 0 29px; }
.menu li { height: 54.5px; display: flex; justify-content: space-between; align-items: center; font-size: 21px; font-weight: 500; letter-spacing: .4px; }
.menu i { padding: 0 2px; }
.top5 { margin: 20px 25px 0; border-top: 1px solid #fff; }
.top5 h2 { height: 45px; display: flex; justify-content: space-between; align-items: center; padding-right: 12px; font-size: 21px; font-weight: 500; letter-spacing: .2px; }
.top5 li { height: 24px; line-height: 22px; font-size: 15.500px; padding-left: 6px; }
.top5 li::before { content: "·"; display: inline-block; width: 10px; font-weight: 700; }

/* main */
.content { padding: 16px 0 0 227px; width: 1648px; }
.topbar { display: flex; align-items: center; height: 47px; }
.pill { width: 124px; height: 45px; border-radius: 23px; background: #666; color: #fff; font-size: 20px; line-height: 43px; text-align: center; margin-right: 6px; box-shadow: 0 1px 1px #999; }
.pill.active { background: #0099e3; font-weight: 500; }
.alert { margin-left: 567px; width: 206px; height: 48px; border: 1px solid #a42828; border-radius: 7px; background: #fff; color: #a42828; display: flex; align-items: center; padding: 0 14px 0 11px; font-size: 18.500px; }
.alert span { margin: 0 auto 0 7px; letter-spacing: -.9px; white-space: nowrap; }
.i-info { margin-left: 17px; }
.i-gear { margin-left: 25px; }
.i-menu { margin-left: 26px; }
.columns { display: flex; gap: 13px; padding: 16px 0 0 2px; }
.left { width: 690px; }
.search { display: flex; height: 49px; color: #fff; }
.field { width: 440px; border: 1px solid #bbb; border-radius: 4px; color: #555; font-size: 17px; line-height: 47px; padding-left: 10px; letter-spacing: .2px; }
.find { width: 60px; margin-left: 5px; background: #666; border-radius: 3px; display: flex; align-items: center; justify-content: center; }
.pick { width: 140px; margin-left: auto; background: #666; color: #fff; border-radius: 3px; font-size: 18px; letter-spacing: -.35px; padding-bottom: 4px; white-space: nowrap; }

/* map */
.map { position: relative; margin-top: 10px; height: 702px; border: 1px solid #acacac; overflow: hidden; }
.terrain { mix-blend-mode: multiply; }
.roads { fill: none; stroke: #e9ae4c; stroke-width: 2; stroke-linejoin: round; }
.roads.minor { stroke: #e8c763; }
.roads path, .borders path { vector-effect: non-scaling-stroke; }
.borders { fill: none; stroke: #434761; stroke-width: 1.600; }
.coast { fill: none; stroke: #1d1d1d; stroke-width: 1.300; }
.coast path { fill: #dddddc; }
.coast use { fill: none; }
.coast use, #land { fill: inherit; }
.islands { fill: none; stroke: #c9b9b9; stroke-width: 1.500; }
.shields text { font: 700 8px "Noto Sans", sans-serif; fill: #fff; text-anchor: middle; }
.cities text { font: 500 12px "Noto Sans CJK KR", sans-serif; fill: #333; stroke: #fff; stroke-width: 2.500; paint-order: stroke; text-anchor: middle; letter-spacing: -.8px; }
.sea { font: 700 16.500px "Noto Sans CJK KR", sans-serif; fill: #2c5c98; text-anchor: middle; }
.stations circle { fill: #f6e583; filter: drop-shadow(1px 1px 1px rgba(60, 60, 60, .5)) opacity(.82); }
.stations .dot { fill: #f5e27b; stroke: #f7fbf4; stroke-width: 1.200; filter: none; }
.stations .dot.g { fill: #3fbf7f; }
.stations path { stroke: #111; }
.stations text { font: 13px "Noto Sans CJK KR", sans-serif; text-anchor: middle; letter-spacing: -1.700px; }
.stations .v { font-size: 12.500px; letter-spacing: -.8px; }
.stations tspan { font-size: 9.500px; letter-spacing: -.500px; fill: #444; }

.layers { position: absolute; left: 9px; top: 9px; display: flex; flex-direction: column; gap: 10px; }
.row { display: grid; grid-template-columns: 99px 41px 41px 72px 65px 40px; gap: 6px; }
.row b { height: 31px; border-radius: 4px; background: rgba(43, 47, 50, .9); color: #fff; font-size: 13px; font-weight: 500; letter-spacing: -.500px; line-height: 27px; white-space: nowrap; text-align: center; }
.row.sub { padding-left: 199px; grid-template-columns: 62px 46px 61px; }
.row.sub b { height: 27px; line-height: 25px; letter-spacing: -1px; }
.row b.on { background: #0099e3; }
.row u { text-decoration: none; border-bottom: 1px solid #fff; padding-bottom: 1px; }
.legend { position: absolute; right: 10px; top: 10px; display: flex; align-items: center; gap: 4px; }
.legend span { width: 108px; height: 24px; display: flex; align-items: center; gap: 4px; padding: 0 5px 2px; background: #f3f3f3; border: 1px solid #aaa; border-radius: 2px; color: #333; font-size: 13px; letter-spacing: -.4px; white-space: nowrap; }
.legend i { width: 30px; height: 30px; border-radius: 50%; background: #626e74; display: flex; align-items: center; justify-content: center; }
.tools { position: absolute; right: 3px; top: 525px; display: flex; flex-direction: column; gap: 5px; }
.tool { width: 30px; height: 60px; border-radius: 15px; background: rgba(60, 72, 78, .78); }
.tool.zoom { background: rgba(40, 47, 50, .9); }
.scale { position: absolute; right: 5px; top: 664px; width: 75px; height: 26px; padding: 3px; border-radius: 3px; background: rgba(40, 43, 48, .85); }
.scale span { display: block; height: 20px; border: 1px solid #fff; border-top: 0; color: #eee; font-size: 9px; font-weight: 700; line-height: 11px; text-align: center; }
.updated { position: absolute; left: 19px; top: 665px; width: 139px; height: 26px; border-radius: 3px; background: #3b4347; color: #fff; font-size: 14px; line-height: 22px; text-align: center; letter-spacing: -.25px; }
.daily { padding: 20px 0 0 10px; font-size: 17px; font-weight: 500; line-height: 22px; color: #222; }

/* current conditions */
.right { width: 484px; padding-top: 1px; }
.location { height: 47px; border-radius: 5px; background: #edf0f6; display: flex; align-items: center; padding: 0 5px 0 13px; }
.place { flex: 1; margin-left: 12px; font-size: 16px; letter-spacing: -.4px; }
.sq { width: 35px; height: 35px; margin-left: 6px; border: 1px solid #8a8a8a; border-radius: 3px; background: #fff; color: #657884; font-size: 20px; font-weight: 700; line-height: 28px; display: flex; align-items: center; justify-content: center; }
.location svg + .sq { margin-left: 17px; }
.asof { display: flex; align-items: center; justify-content: flex-end; gap: 2px; height: 38px; padding-right: 12px; font-size: 16px; letter-spacing: -.15px; }
.temp { display: flex; height: 84px; padding-left: 123px; }
.temp strong { font-weight: 400; font-size: 49px; line-height: 74px; letter-spacing: 1px; }
.temp sup { font-size: 21px; line-height: 56px; margin-left: 1px; }
.temp span { font-size: 19px; line-height: 97px; margin-left: 12px; letter-spacing: -.5px; }
.temp svg { margin: 35px 0 0 2px; }
.compare { height: 45px; text-align: center; font-size: 20px; line-height: 35px; letter-spacing: 0; }
.compare b { font-weight: 500; }
.stats { display: grid; grid-template-columns: 164px 158px 162px; height: 44px; text-align: center; }
.stats > div { padding-left: 6px; border-right: 1px solid #c8c8c8; }
.stats > div + div { padding-left: 1px; }
.stats > div + div + div { padding-right: 4px; border: 0; }
.stats p { display: flex; align-items: center; justify-content: center; gap: 4px; height: 20px; font-size: 15.500px; }
.stats em { display: block; margin-top: 6px; font-size: 15px; line-height: 20px; }
.stats small { font-size: 13px; }
.sun { display: flex; align-items: center; height: 50px; margin-top: 10px; padding: 0 0 2px 10px; font-size: 13.500px; white-space: nowrap; }
.sun span { margin-left: 8px; line-height: 18px; padding-bottom: 1px; }
.w24 { width: 25px; }
.w35 { width: 36px; }
.sun .gap { margin-left: 15px; }
.sun a { width: 109px; height: 34px; margin-left: 15px; border: 1px solid #3f83d8; border-radius: 3px; color: #3f83d8; font-size: 13px; line-height: 14px; text-align: center; padding-top: 1px; margin-top: 4px; }
.sun a + a { margin-left: 16px; }
.notice { height: 44px; margin-top: 6px; background: #edf0f6; text-align: center; font-size: 15.300px; line-height: 40px; }
.air { display: grid; grid-template-columns: 168px 148px 168px; text-align: center; padding: 10px 0 5px; }
.gauge { display: grid; justify-content: center; }
.gauge > * { grid-area: 1 / 1; }
.gauge p { align-self: center; font-size: 16px; line-height: 14px; padding-bottom: 3px; }
.gauge small { font-size: 14px; }
.kind { margin-top: 5px; font-size: 15.500px; line-height: 24px; white-space: nowrap; }
.kind small { font-size: 12.800px; }
.grade { display: flex; justify-content: center; align-items: center; gap: 2px; height: 24px; padding-right: 2px; font-size: 14.500px; }
.source { text-align: right; padding-right: 4px; font-size: 13.700px; line-height: 28px; letter-spacing: -.1px; white-space: nowrap; }
.source + .source { margin-bottom: 12px; font-size: 13.600px; }
.near { display: flex; gap: 2px; height: 20px; }
.near h3 { flex: 1; display: flex; align-items: center; gap: 2px; padding-left: 2px; font-size: 14.500px; font-weight: 400; letter-spacing: -.1px; }
.near a { width: 63px; border: 1px solid #3f83d8; border-radius: 2px; color: #5a90dc; font-size: 13.500px; line-height: 17px; text-align: center; }
.near a.on { width: 55px; background: #0099e3; color: #fff; font-weight: 500; }
.near-info { display: flex; justify-content: space-between; height: 29px; padding: 0 5px; line-height: 30px; font-size: 12.500px; white-space: nowrap; }
.near-info b { font-weight: 500; letter-spacing: 0; }
table { width: 484px; border-collapse: collapse; table-layout: fixed; font-size: 13.600px; text-align: center; }
th, td { height: 30.500px; border: 1px solid #ccc; font-weight: 400; line-height: 20px; padding-bottom: 4px; }
th { background: #edf0f6; }
.c1 { width: 174px; }
.c2 { width: 163px; }
.c3 { width: 60px; }
.foot { padding-left: 5px; font-size: 12.500px; line-height: 25px; letter-spacing: -.1px; }
```
